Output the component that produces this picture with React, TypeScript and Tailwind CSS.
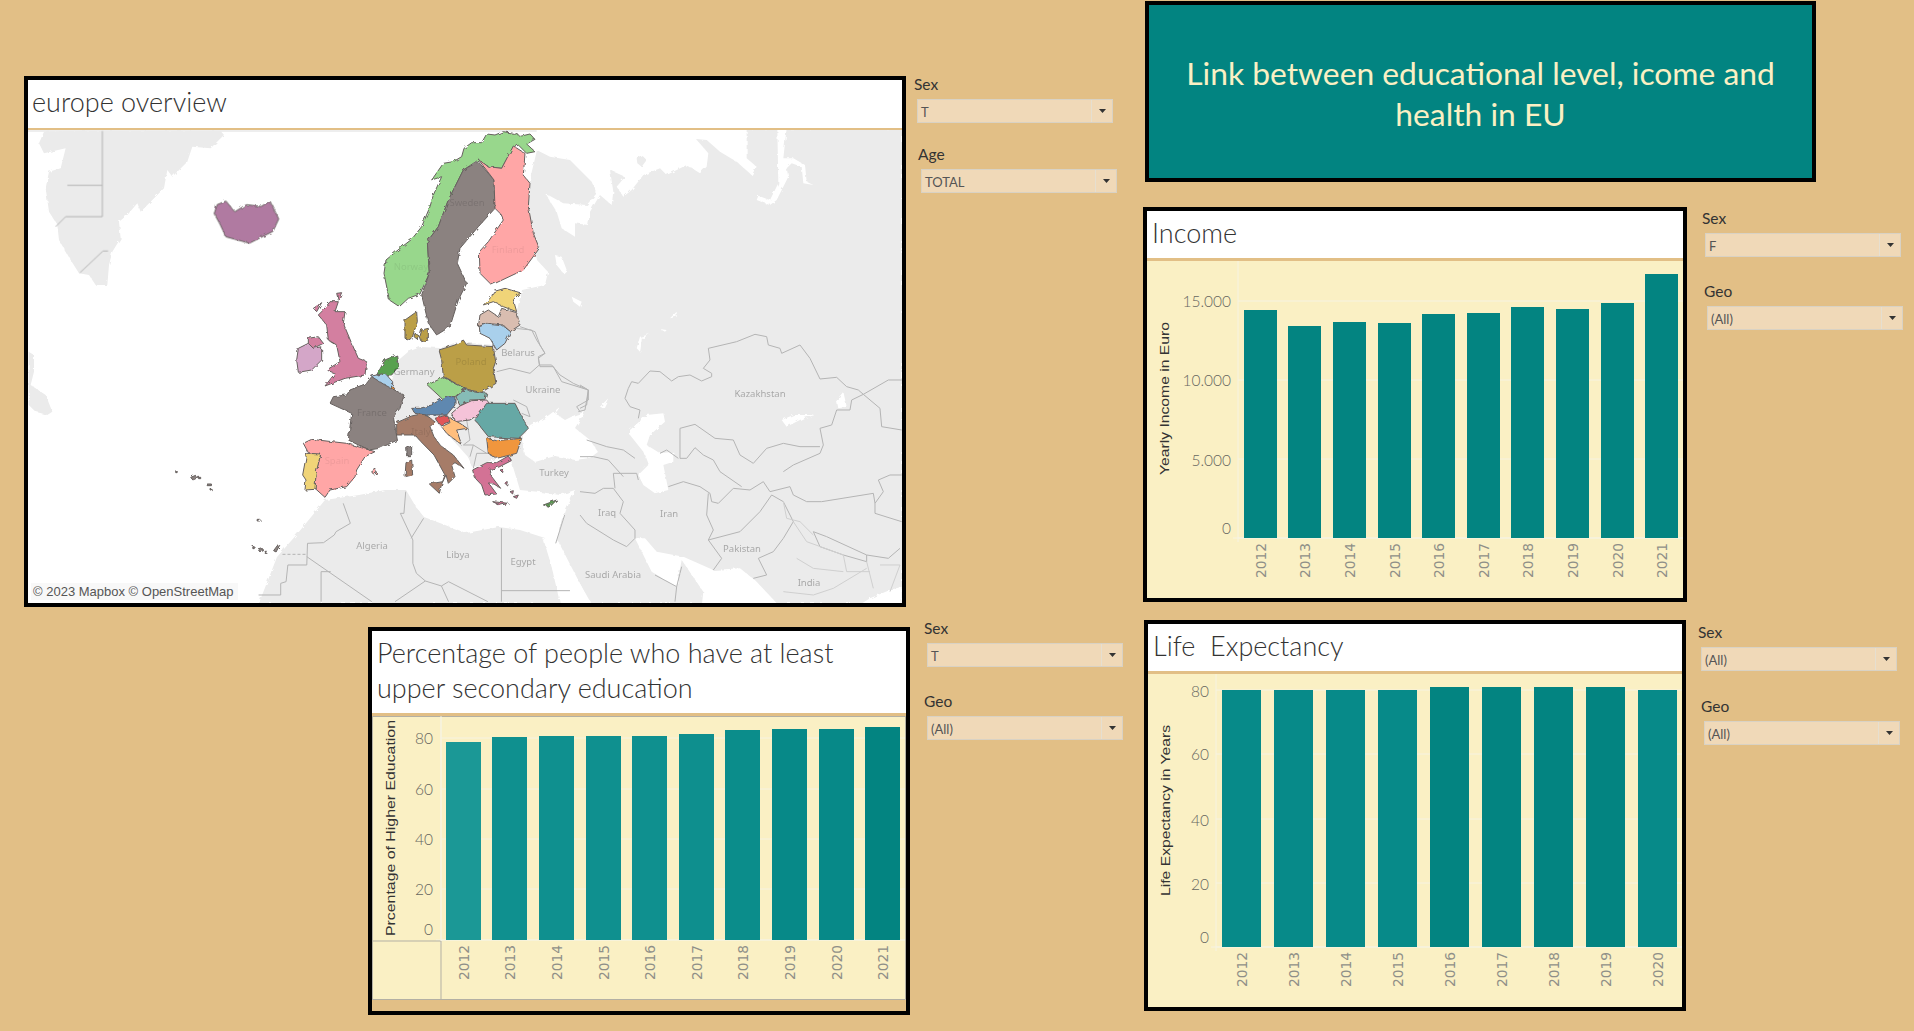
const tan = "#e2bf86";

// ---- filters ----
function Filter({ label, value, boxClass, className }: { label: string; value: string; boxClass: string; className?: string }) {
  return (
    <div className={className}>
      <div className="h-5 mb-1 text-[15.5px] leading-[18px] text-[#333] font-['Lato',sans-serif]">{label}</div>
      <div className={`flex items-center w-[196px] h-6 bg-[#f0d9b8] border border-[#d9d2c4] font-['Lato',sans-serif] ${boxClass}`}>
        <span className="flex-1 pl-[3px] pt-[3px] text-[13px] text-[#555]">{value}</span>
        <span className="flex items-center justify-center w-[21px] h-full border-l border-[#e6dfd0]">
          <svg width="7" height="4" viewBox="0 0 7 4">
            <path d="M0 0H7L3.5 4Z" fill="#333" />
          </svg>
        </span>
      </div>
    </div>
  );
}

// ---- bar charts, drawn in page coordinates through the viewBox ----
type ChartProps = {
  box: [number, number, number, number];
  bottom: number;
  axisX: number;
  tickRight: number;
  ticks: { label: string; grid: number; y: number }[];
  bars: { x: number; w: number; top: number; fill: string }[];
  years: string[];
  yearsFrom: number;
  axisTitle: string;
  axisTitleX: number;
  axisTitleY: number;
  axisTitleLength: number;
  children?: React.ReactNode;
};

function BarChart({ box, bottom, axisX, tickRight, ticks, bars, years, yearsFrom, axisTitle, axisTitleX, axisTitleY, axisTitleLength, children }: ChartProps) {
  const [x, y, w, h] = box;
  const right = x + w;
  return (
    <svg className="block" width={w} height={h} viewBox={`${x} ${y} ${w} ${h}`}>
      <rect x={x} y={y} width={w} height={h} fill="#faf0c4" />
      <line x1={axisX} x2={axisX} y1={y} y2={bottom + 4} stroke="#f6f3e2" />
      {ticks.map((t) => (
        <line key={t.label} x1={axisX} x2={right} y1={t.grid} y2={t.grid} stroke="#f6f3e2" />
      ))}
      <line x1={axisX - 5} x2={right} y1={bottom} y2={bottom} stroke="#f6f3e2" />
      {bars.map((b, i) => (
        <g key={i}>
          <rect x={b.x} y={b.top} width={b.w} height={bottom - b.top} fill={b.fill} />
          <text
            transform={`rotate(-90 ${b.x + b.w / 2} ${yearsFrom})`}
            x={b.x + b.w / 2}
            y={yearsFrom}
            dominantBaseline="central"
            fontFamily="'DejaVu Sans', sans-serif"
            fontSize="13.8"
            fill="#8f8f88"
          >
            {years[i]}
          </text>
        </g>
      ))}
      {ticks.map((t) => (
        <text key={t.label} x={tickRight} y={t.y} textAnchor="end" dominantBaseline="central" fontFamily="'Lato', sans-serif" fontSize="15.5" fontWeight="300" fill="#66665f">
          {t.label}
        </text>
      ))}
      <text
        transform={`rotate(-90 ${axisTitleX} ${axisTitleY})`}
        x={axisTitleX}
        y={axisTitleY}
        dominantBaseline="central"
        fontFamily="'Liberation Sans', sans-serif"
        fontSize="12.5"
        fill="#333"
        textLength={axisTitleLength}
        lengthAdjust="spacingAndGlyphs"
      >
        {axisTitle}
      </text>
      {children}
    </svg>
  );
}

const teal = "#038481";
const tealLight = "#078a89";
const years = ["2012", "2013", "2014", "2015", "2016", "2017", "2018", "2019", "2020", "2021"];

const incomeBars = [
  [1244, 310], [1288, 326], [1333, 322], [1378, 323], [1422, 314],
  [1467, 313], [1511, 307], [1556, 309], [1601, 303], [1645, 274],
].map(([x, top]) => ({ x, top, w: 33, fill: teal }));

const lifeBars = [
  [1222, 690, tealLight], [1274, 690, tealLight], [1326, 690, tealLight], [1378, 690, tealLight], [1430, 687, teal],
  [1482, 687, teal], [1534, 687, teal], [1586, 687, teal], [1638, 690, tealLight],
].map(([x, top, fill]) => ({ x: x as number, top: top as number, w: 39, fill: fill as string }));

const eduBars = [
  [446, 742, "#1b9896"], [492, 737, "#0f908f"], [539, 736, "#0f908f"], [586, 736, "#0f908f"], [632, 736, "#0f908f"],
  [679, 734, "#0e8f8e"], [725, 730, "#0b8d8b"], [772, 729, "#078988"], [819, 729, "#078988"], [865, 727, "#038481"],
].map(([x, top, fill]) => ({ x: x as number, top: top as number, w: 35, fill: fill as string }));

// ---- map ----
const land = "#ebebeb";
const line = "#b4b4b4";
const outline = "#66605e";

const Z2 = "translate(340 120) scale(.33333)";
const Z9 = "translate(280 280) scale(.33333)";
const Z10 = "translate(580 125) scale(.33333)";
const Z11 = "translate(24 125) scale(.33333)";
const Z12 = "translate(520 125) scale(.33333)";
const Z8 = "translate(20 400) scale(.35714 .33333)";
const Z1 = "translate(0 60) scale(.58685 .35714)";

const eurasia =
  "M537 150 L540 130 H902 V603 H590 L557 539 L566 510 L575 490 L560 495 L540 492 L520 490 L517 480 L513 467 L510 457 L497 458 L473 468 L468 457 L460 448 L437 423 L405 425 L393 418 L403 395 L385 400 L393 377 L395 363 L408 352 L420 347 L440 348 L457 342 L495 345 L510 330 L520 325 L517 310 L522 290 L545 285 L548 272 L537 260 L525 200 Z";
const africa =
  "M325 500 L359 495 L385 490 L406 490 L416 507 L424 517 L445 525 L466 533 L499 527 L520 530 L545 538 L560 603 H259 L268 580 L277 557 L298 533 Z";

const countries: { d: string; fill: string; t: string }[] = [
  { t: Z2, fill: "#98d78c", d: "M585 58 L570 42 L545 48 L520 40 L490 35 L465 45 L440 42 L425 68 L395 68 L372 85 L365 110 L340 125 L310 130 L275 180 L305 170 L280 225 L270 260 L245 320 L215 358 L180 385 L138 420 L132 460 L148 540 L178 560 L205 535 L240 522 L268 460 L262 365 L295 320 L325 240 L370 150 L415 120 L445 140 L485 145 L515 90 L535 75 L560 100 L585 95 L560 72 Z" },
  { t: Z2, fill: "#8b8280", d: "M415 125 L370 150 L325 240 L295 320 L262 365 L268 460 L245 525 L265 610 L290 645 L330 620 L355 540 L380 490 L352 430 L360 385 L415 320 L465 265 L462 180 Z" },
  { t: Z2, fill: "#ffa6a6", d: "M415 118 L445 140 L485 145 L520 78 L555 100 L550 165 L570 190 L565 260 L580 340 L598 385 L550 450 L455 495 L420 460 L418 395 L445 365 L490 300 L480 280 L465 265 L462 180 Z" },
  { t: Z2, fill: "#f0d478", d: "M460 515 L495 505 L540 518 L520 540 L530 575 L490 560 L460 545 L430 555 L455 530 Z" },
  { t: Z2, fill: "#d9bdb0", d: "M485 565 L530 578 L540 615 L510 635 L490 615 L440 610 L415 620 L420 585 L445 570 L475 590 Z" },
  { t: Z2, fill: "#a9d0ec", d: "M418 620 L440 612 L490 618 L512 635 L495 670 L470 690 L450 655 L420 640 Z" },
  { t: Z2, fill: "#bb9f47", d: "M297 690 L345 675 L370 660 L380 675 L460 680 L467 725 L460 745 L468 790 L420 820 L375 805 L310 770 L305 720 Z" },
  { t: Z2, fill: "#bb9f47", d: "M195 600 L230 575 L232 605 L222 635 L215 660 L195 655 Z M225 640 L238 648 L235 660 L222 650 Z M245 630 L265 625 L265 660 L245 665 L240 650 Z" },
  { t: Z2, fill: "#59a14f", d: "M110 765 L135 720 L170 705 L175 740 L155 765 Z" },
  { t: Z2, fill: "#a9d0ec", d: "M95 768 L135 760 L158 785 L158 810 L120 795 Z" },
  { t: Z2, fill: "#f28e2b", d: "M155 798 L164 805 L160 815 L152 810 Z" },
  { t: Z2, fill: "#98d78c", d: "M262 795 L310 772 L375 805 L345 830 L305 835 Z" },
  { t: Z2, fill: "#86bcb6", d: "M348 830 L375 808 L440 820 L435 838 L390 840 L360 858 Z" },
  { t: Z2, fill: "#f5c3d8", d: "M335 880 L360 858 L395 842 L440 840 L448 850 L420 880 L390 900 L345 905 Z" },
  { t: Z2, fill: "#66a8a5", d: "M405 900 L440 850 L525 850 L540 880 L565 925 L535 955 L445 950 Z" },
  { t: Z2, fill: "#f0963c", d: "M440 955 L470 962 L545 955 L530 1000 L470 1015 L445 1000 Z" },
  { t: Z2, fill: "#d37295", d: "M398 1050 L440 1028 L470 1028 L505 1008 L514 1022 L475 1042 L450 1048 L455 1070 L482 1105 L462 1092 L448 1092 L470 1122 L435 1125 L425 1095 L403 1072 Z M458 1145 L505 1150 L480 1156 Z M480 1050 L490 1048 L488 1058 Z M495 1090 L505 1088 L503 1098 Z M510 1115 L520 1112 L518 1122 Z M520 1130 L535 1125 L530 1135 Z" },
  { t: Z2, fill: "#59a14f", d: "M610 1155 L650 1140 L630 1160 Z" },
  { t: Z9, fill: "#8b8280", d: "M275 290 L315 315 L372 345 L360 385 L340 410 L352 480 L300 505 L265 510 L205 480 L215 400 L150 370 L160 350 L200 345 L210 330 L260 310 Z M380 505 L395 498 L395 530 L382 530 Z" },
  { t: Z9, fill: "#d37fa0", d: "M150 65 L175 65 L165 95 L195 95 L190 130 L215 190 L235 235 L260 245 L255 285 L195 295 L135 318 L165 280 L140 270 L180 245 L170 195 L145 180 L140 135 L115 105 L130 90 Z M85 175 L115 170 L130 190 L100 205 L85 190 Z M100 85 L125 68 L110 95 Z M170 40 L185 38 L175 60 Z" },
  { t: Z9, fill: "#d4a6c8", d: "M55 205 L85 190 L100 205 L125 200 L125 240 L95 270 L55 277 L50 240 Z" },
  { t: Z9, fill: "#ffa6a6", d: "M70 490 L95 478 L200 490 L285 515 L255 530 L230 570 L225 590 L200 620 L150 630 L135 652 L105 625 L108 575 L122 525 L85 518 Z M272 572 L285 565 L290 580 L280 582 Z" },
  { t: Z9, fill: "#f0d478", d: "M80 520 L122 522 L108 580 L105 628 L75 630 L78 600 L68 585 Z" },
  { t: Z9, fill: "#a67c67", d: "M350 428 L395 408 L432 400 L465 425 L450 440 L462 470 L482 497 L520 525 L552 565 L525 548 L515 555 L525 590 L505 610 L498 585 L485 612 L478 640 L448 612 L488 605 L495 585 L462 525 L420 482 L405 465 L350 465 Z M378 548 L395 540 L398 585 L375 590 Z" },
  { t: Z9, fill: "#5f88b0", d: "M395 385 L420 385 L455 375 L495 350 L525 350 L525 375 L500 405 L440 405 L405 400 Z" },
  { t: Z9, fill: "#e15759", d: "M465 415 L500 405 L510 425 L480 435 Z" },
  { t: Z9, fill: "#ffbe7d", d: "M505 412 L540 430 L562 445 L530 450 L545 495 L500 460 L485 440 L510 428 Z" },
  { t: Z1, fill: "#b07aa1", d: "M370 405 L385 395 L400 425 L420 405 L445 410 L460 395 L475 445 L465 480 L425 513 L385 495 L375 460 L365 430 Z" },
  { t: Z8, fill: "#8b8280", d: "M436 212h4v6h-4z M478 232l14-6 4 8-12 6z M500 232h6v4h-6z M524 252h12v5h-12z M535 268h3v5h-3z M664 358h8v5h-8z M652 440h4v6h-4z M668 450l12-4 2 6-10 4z M686 454h6v6h-6z M710 452l14-20 3 4-10 20z" },
];

const labels: [string, number, number, number][] = [
  ["Sweden", 467, 202, 0.12], ["Norway", 411, 266, 0.07], ["Finland", 508, 249, 0.07], ["Poland", 471, 361, 0.12], ["Germany", 414, 371, 0.3],
  ["Belarus", 518, 352, 0.3], ["Ukraine", 543, 389, 0.3], ["Turkey", 554, 472, 0.3], ["France", 372, 412, 0.15], ["Italy", 421, 431, 0.1],
  ["Spain", 337, 460, 0.07], ["Kazakhstan", 760, 393, 0.3], ["Iraq", 607, 512, 0.3], ["Iran", 669, 513, 0.3], ["Pakistan", 742, 548, 0.3],
  ["Saudi Arabia", 613, 574, 0.3], ["India", 809, 582, 0.3], ["Algeria", 372, 545, 0.3], ["Libya", 458, 554, 0.3], ["Egypt", 523, 561, 0.3],
];

function EuropeMap() {
  return (
    <svg className="block" width="874" height="473" viewBox="28 130 874 473">
      <defs>
        {/* roughens the traced outlines into a coastline */}
        <filter id="coast" x="-5%" y="-5%" width="110%" height="110%">
          <feTurbulence type="fractalNoise" baseFrequency="0.22" numOctaves="2" seed="4" result="noise" />
          <feDisplacementMap in="SourceGraphic" in2="noise" scale="3.5" />
        </filter>
      </defs>
      <rect x="28" y="130" width="874" height="473" fill="#fff" />
      <rect x="28" y="130" width="874" height="2" fill="#eeeeee" />
      {/* land */}
      <g filter="url(#coast)">
        <path transform={Z11} fill={land} d="M45 55 L60 20 L120 18 L590 18 L600 30 L560 70 L505 65 L490 110 L445 155 L430 135 L420 190 L350 260 L340 235 L310 270 L285 290 L290 340 L265 380 L255 420 L250 480 L215 480 L195 450 L165 445 L140 405 L105 345 L100 300 L75 260 L65 190 L75 140 L110 130 L125 70 L60 85 Z M14 680 L30 690 L30 740 L20 780 L65 810 L85 860 L70 870 L35 860 L14 840 Z" />
        <path d={eurasia} fill={land} />
        <path d={africa} fill={land} />
        {/* water on the land */}
        <g fill="#fff">
          <path transform={Z12} d="M50 10 H680 L680 100 L710 125 L695 150 L650 110 L600 80 L560 45 L528 42 L565 85 L560 125 L540 145 L500 120 L440 150 L420 130 L370 150 L335 195 L310 215 L290 185 L315 155 L270 135 L280 200 L275 240 L240 210 L210 260 L205 300 L165 295 L165 335 L125 310 L110 260 L75 205 L130 235 L200 240 L230 205 L215 170 L150 105 L90 95 L50 75 Z" />
          <path transform={Z12} fill={land} d="M350 100 L365 90 L380 105 L365 125 L352 115 Z" />
          <path transform={Z12} d="M772 10 H800 L790 100 L820 100 L855 120 L860 170 L880 180 L850 175 L845 125 L815 115 L800 130 L805 155 L770 225 L750 240 L710 225 L715 212 L750 225 L775 175 Z M105 390 L125 395 L140 435 L130 445 L110 420 Z M30 420 L60 425 L80 455 L60 480 L35 450 Z M155 515 L185 530 L180 545 L160 530 Z M350 670 L360 635 L390 628 L365 640 L360 680 Z M450 580 L470 560 L470 575 Z M420 612 L440 615 L435 620 Z M240 845 L265 820 L250 850 Z M90 870 L120 845 L100 875 Z" />
          <path d="M522 440 L530 425 L545 418 L553 412 L565 420 L575 415 L585 412 L575 428 L590 440 L598 452 L590 458 L575 460 L555 456 L535 462 L525 455 Z" />
          <path d="M543 538 L552 540 L575 575 L595 610 L565 610 Z" />
          <path transform={Z10} d="M165 1240 L215 1340 L290 1385 L305 1305 L370 1400 L365 1445 H600 L530 1370 L480 1330 L400 1335 L310 1295 L230 1280 L195 1240 Z M830 1445 L870 1420 L930 1395 L965 1385 V1445 Z M150 915 L200 870 L250 865 L255 890 L210 930 L200 960 L240 985 L280 980 L280 1010 L250 1020 L265 1095 L225 1105 L190 1080 L175 1050 L205 1020 L190 980 L150 930 Z M605 885 L640 870 L705 870 L670 880 L620 905 Z M770 825 L790 800 L800 845 L775 850 Z M175 650 L210 625 L185 640 L180 680 Z" />
        </g>
      </g>
      {/* borders */}
      <g fill="none" stroke={line} strokeWidth="1">
        <path transform={Z11} vectorEffect="non-scaling-stroke" d="M235 18 V275 H125 L95 305 M130 181 H235 M168 443 L237 378 H252" />
        <path transform={Z8} vectorEffect="non-scaling-stroke" d="M905 310 L925 370 L885 395 L880 405 L850 428 L805 430 L803 495 L750 495 L745 545 L730 550 L730 585 L668 585 M803 470 L985 605 M843 605 V515 H870 M1080 275 L1075 340 L1065 340 L1100 420 L1100 490 L1110 520 L1135 543 L1050 605 M1135 543 L1180 558 L1200 545 L1310 605 M1180 558 L1200 605 M1348 385 V605 M1348 572 H1540 M1130 355 L1095 415 M1500 430 L1525 345" />
        <path transform={Z8} vectorEffect="non-scaling-stroke" strokeDasharray="3 2" d="M735 463 H803" />
        <path transform={Z10} vectorEffect="non-scaling-stroke" d="M175 880 L180 855 L150 845 L135 820 L145 790 L155 770 L175 775 L210 738 L240 740 L275 768 L295 755 L330 750 L365 768 L395 755 L395 745 L370 730 L390 705 L385 670 L470 650 L525 628 L560 635 L565 660 L600 670 L605 685 L660 660 L690 700 L720 762 L770 757 L800 785 L835 795 L850 808 L815 825 L810 855 L770 855 L755 900 L720 910 L730 960 L720 985 L640 1020 L610 1040 M345 898 L300 910 V1000 H320 L345 968 L370 990 L400 1005 L420 1040 L485 1085 M345 898 L405 940 L460 945 L480 990 L520 1015 L560 970 L610 955 L660 965 L720 965 M240 985 L260 975 L295 1000 M265 1085 L310 1070 L360 1085 L390 1105 L395 1130 L415 1135 L460 1090 L510 1095 L550 1070 L570 1100 L630 1085 L640 1110 L680 1130 L725 1130 L880 1105 L885 1135 L910 1100 L895 1065 L930 1050 L965 1050 M385 1105 L380 1170 L400 1215 L385 1245 L425 1300 L400 1335 M385 1245 L480 1220 L540 1160 L575 1110 M850 808 L900 850 L905 905 L965 915 M850 808 L925 765 L965 765 M575 1110 L610 1130 L640 1190 L610 1240 L580 1280 L535 1300 L560 1350 L520 1360 M700 1220 L740 1235 L860 1290 L860 1310 L790 1290 L720 1265 L700 1220 M860 1290 L925 1300 L960 1270 M885 1135 L885 1165 L965 1190 M0 1100 L45 1105 L70 1090 L100 1090 L130 1130 L120 1165 L165 1215 L165 1240 L140 1265 L100 1245 L20 1195 L0 1170 M100 1045 L105 1090 M20 945 L80 965 L130 975 L165 1000 M85 1005 L130 1055 M100 1045 L170 1045 L175 1065 M0 995 L40 995 L85 1005 M290 1385 L300 1345 L305 1325 M225 1350 L290 1385 L285 1430 M0 780 L25 795 L20 840 L0 850" />
        <path transform={Z10} vectorEffect="non-scaling-stroke" stroke="#cfcfcf" d="M610 1130 L620 1180 L660 1190 L700 1230 M640 1190 L680 1250 L790 1290 L800 1340 L870 1340 M650 1300 L700 1330 L790 1340 M610 1400 L700 1410 L760 1390 L860 1330 M860 1310 L880 1390 M900 1320 L960 1320 L930 1400" />
        <path transform={Z2} vectorEffect="non-scaling-stroke" d="M525 625 L575 630 L590 660 L615 700 L595 710 L598 735 L570 760 L510 745 L470 755 M598 735 L635 735 L660 765 L700 790 L745 810 L745 840 L710 860 L720 875 M520 840 L560 860 L570 890 L545 880 M380 900 L390 960 L370 975 L400 975 L440 1000 M390 1010 L400 975 M445 1000 L410 1000 L400 1045" />
        <path transform={Z12} vectorEffect="non-scaling-stroke" d="M0 605 L45 620 L60 660 L75 685 L55 700 L60 725 L100 725 L125 770 L205 795 L195 855 L175 860" />
      </g>
      {/* countries with data */}
      <g filter="url(#coast)">
        {countries.map((c, i) => (
          <path key={i} transform={c.t} d={c.d} fill={c.fill} stroke={outline} strokeWidth="1" vectorEffect="non-scaling-stroke" strokeLinejoin="round" />
        ))}
      </g>
      {labels.map(([name, x, y, alpha]) => (
        <text key={name} x={x} y={y} textAnchor="middle" dominantBaseline="central" fontFamily="'Noto Sans', sans-serif" fontSize="9.5" fill="#000" fillOpacity={alpha}>
          {name}
        </text>
      ))}
    </svg>
  );
}

function CardTitle({ children, className }: { children: React.ReactNode; className: string }) {
  return <div className={`bg-white border-b-[3px] border-[#e2bf86] pl-[5px] text-[#333] font-['Lato',sans-serif] font-light text-[27px] ${className}`}>{children}</div>;
}

export default function App() {
  return (
    <div className="flex w-[1914px] h-[1031px] overflow-hidden" style={{ background: tan }}>
      {/* left column */}
      <div className="w-[1143px] shrink-0">
        <div className="flex mt-[76px] ml-6">
          <div className="w-[882px] h-[531px] shrink-0 border-4 border-black bg-white">
            <div className="h-[50px] bg-white border-b-2 border-[#e2bf86] pl-1 text-[#333] font-['Lato',sans-serif] font-light text-[27px] leading-[43px]">europe overview</div>
            <div className="relative">
              <EuropeMap />
              <div className="absolute left-[3px] bottom-[3px] h-[17px] w-[207px] bg-[#f8f8f8] pl-[2px] text-[13px] leading-[17px] text-[#555] font-['Liberation_Sans',sans-serif]">© 2023 Mapbox © OpenStreetMap</div>
            </div>
          </div>
          <div className="ml-2 -mt-px">
            <Filter label="Sex" value="T" boxClass="ml-[3px]" />
            <Filter label="Age" value="TOTAL" boxClass="ml-[3px]" className="mt-[22px] ml-1" />
          </div>
        </div>
        <div className="flex mt-5 ml-[368px]">
          <div className="w-[542px] h-[388px] shrink-0 border-4 border-black" style={{ background: tan }}>
            <CardTitle className="h-[85px] pt-[4px] leading-[35px]">
              Percentage of people who have at least
              <br />
              upper secondary education
            </CardTitle>
            <BarChart
              box={[372, 716, 534, 284]}
              bottom={940}
              axisX={441}
              tickRight={433}
              ticks={[
                { label: "80", grid: 738, y: 738 },
                { label: "60", grid: 789, y: 789 },
                { label: "40", grid: 839, y: 839 },
                { label: "20", grid: 889, y: 889 },
                { label: "0", grid: 940, y: 929 },
              ]}
              bars={eduBars}
              years={years}
              yearsFrom={980}
              axisTitle="Prcentage of Higher Education"
              axisTitleX={390.5}
              axisTitleY={936}
              axisTitleLength={216}
            >
              <path d="M372.5 716V1000M372.5 999.5H905.5V716M372 941H441M441 941V1000M372 716.5H906" fill="none" stroke="#b3b0a4" />
              <line x1="441" x2="441" y1="716" y2="941" stroke="#f6f3e2" />
            </BarChart>
          </div>
          <div className="ml-3.5 -mt-2">
            <Filter label="Sex" value="T" boxClass="ml-[3px]" />
            <Filter label="Geo" value="(All)" boxClass="ml-[3px]" className="mt-[25px]" />
          </div>
        </div>
      </div>

      {/* right column */}
      <div className="flex-1">
        <div className="flex items-center justify-center w-[671px] h-[181px] mt-px ml-0.5 pt-1 border-4 border-black bg-[#028481] text-center text-[#faf0c4] font-['Lato',sans-serif] text-[31.8px] leading-[41px]">
          <div className="w-[610px]">Link between educational level, icome and health in EU</div>
        </div>
        <div className="flex mt-[25px]">
          <div className="w-[544px] h-[395px] shrink-0 border-4 border-black bg-[#faf0c4]">
            <CardTitle className="h-[50px] leading-[43px]">Income</CardTitle>
            <BarChart
              box={[1147, 261, 536, 337]}
              bottom={538}
              axisX={1238}
              tickRight={1231}
              ticks={[
                { label: "15.000", grid: 301, y: 301 },
                { label: "10.000", grid: 380, y: 380 },
                { label: "5.000", grid: 459, y: 460 },
                { label: "0", grid: 538, y: 528 },
              ]}
              bars={incomeBars}
              years={years}
              yearsFrom={578}
              axisTitle="Yearly Income in Euro"
              axisTitleX={1165}
              axisTitleY={475}
              axisTitleLength={153}
            />
          </div>
          <div className="ml-[15px] mt-0.5">
            <Filter label="Sex" value="F" boxClass="ml-[3px]" />
            <Filter label="Geo" value="(All)" boxClass="ml-[3px]" className="mt-[25px] ml-0.5" />
          </div>
        </div>
        <div className="flex mt-[18px] ml-px">
          <div className="w-[542px] h-[391px] shrink-0 border-4 border-black bg-[#faf0c4]">
            <CardTitle className="h-[50px] leading-[43px] whitespace-pre">Life  Expectancy</CardTitle>
            <BarChart
              box={[1148, 674, 534, 333]}
              bottom={947}
              axisX={1216}
              tickRight={1209}
              ticks={[
                { label: "80", grid: 690, y: 691 },
                { label: "60", grid: 754, y: 754 },
                { label: "40", grid: 819, y: 820 },
                { label: "20", grid: 883, y: 884 },
                { label: "0", grid: 947, y: 937 },
              ]}
              bars={lifeBars}
              years={years}
              yearsFrom={987}
              axisTitle="Life Expectancy in Years"
              axisTitleX={1166}
              axisTitleY={896}
              axisTitleLength={171}
            />
          </div>
          <div className="ml-3 mt-[3px]">
            <Filter label="Sex" value="(All)" boxClass="ml-[3px]" />
            <Filter label="Geo" value="(All)" boxClass="ml-[3px]" className="mt-[26px] ml-[3px]" />
          </div>
        </div>
      </div>
    </div>
  );
}
